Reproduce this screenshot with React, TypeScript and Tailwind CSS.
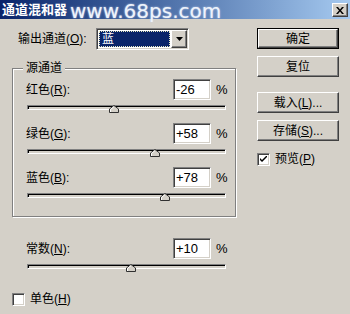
import React from 'react';

const sunken =
  'border border-t-[#808080] border-l-[#808080] border-r-white border-b-white shadow-[inset_1px_1px_0_#404040,inset_-1px_-1px_0_#d4d0c8]';
const raised =
  'border border-t-white border-l-white border-r-[#404040] border-b-[#404040] shadow-[inset_-1px_-1px_0_#808080]';

const Button = ({ children, primary }: { children: React.ReactNode; primary?: boolean }) =>
  primary ? (
    <div className="w-[82px] h-[21px] border border-black">
      <div className={`h-full flex items-center justify-center ${raised}`}>{children}</div>
    </div>
  ) : (
    <div className={`w-[82px] h-[21px] flex items-center justify-center ${raised}`}>{children}</div>
  );

const Checkbox = ({ checked }: { checked?: boolean }) => (
  <div className={`w-[13px] h-[13px] bg-white flex items-center justify-center ${sunken}`}>
    {checked && (
      <svg width="7" height="7" viewBox="0 0 7 7">
        <path d="M0 2 L0 4 L2 6 L7 1 L7 -1 L2 4 Z" fill="#000" />
      </svg>
    )}
  </div>
);

// value range is -200..200
const Slider = ({ value }: { value: number }) => {
  const pct = ((value + 200) / 400) * 100;
  return (
    <div className="relative ml-[1px] w-[199px] h-[8px]">
      <div className="mt-[3px] h-[5px] border border-t-[#808080] border-l-[#808080] border-r-white border-b-white bg-[#d4d0c8] shadow-[inset_1px_1px_0_#000]" />
      <svg
        className="absolute top-0"
        style={{ left: `calc(${pct}% - 5px)` }}
        width="10"
        height="8"
        viewBox="0 0 10 8"
      >
        <polygon points="5,0.5 9.5,4 9.5,7.5 0.5,7.5 0.5,4" fill="#d4d0c8" stroke="#303030" />
        <polyline points="1.5,7 1.5,4.4 5,1.6" fill="none" stroke="#fff" />
      </svg>
    </div>
  );
};

const ValueRow = ({ label, k, value }: { label: string; k: string; value: string }) => (
  <div className="flex items-center h-[21px]">
    <span className="w-[147px] text-[12px] leading-[14px]">
      {label}(<span className="underline">{k}</span>):
    </span>
    <div className={`w-[38px] h-[21px] bg-white flex items-center pl-[2px] text-[13px] ${sunken}`}>{value}</div>
    <span className="ml-[5px] text-[13px]">%</span>
  </div>
);

export default function App() {
  return (
    <div className="w-[350px] h-[314px] bg-[#d4d0c8] overflow-hidden text-black font-['Liberation_Sans','Noto_Sans_CJK_SC',sans-serif]">
      {/* title bar */}
      <div className="relative z-10 h-[19px] flex items-start bg-gradient-to-r from-[#0a246a] to-[#a6caf0]">
        <span className="pl-[2px] pt-[2px] text-[13px] leading-[15px] font-bold text-white">通道混和器</span>
        <span className="ml-[3px] mt-[1px] shrink-0 whitespace-nowrap font-['DejaVu_Sans',sans-serif] text-[20px] leading-[20px] text-[#eef3fb] [text-shadow:0_0_2px_#c8d6f0]">
          www.68ps.com
        </span>
        <div className={`ml-auto mr-[2px] mt-[3px] w-[16px] h-[14px] bg-[#d4d0c8] flex items-center justify-center ${raised}`}>
          <svg width="8" height="7" viewBox="0 0 8 7">
            <path d="M0 0h2l2 2.5L6 0h2L5 3.5 8 7H6L4 4.5 2 7H0l3-3.5z" fill="#000" />
          </svg>
        </div>
      </div>

      <div className="flex">
        {/* left column */}
        <div className="w-[245px] shrink-0 pl-[12px]">
          <div className="mt-[9px] flex items-center h-[22px]">
            <span className="w-[84px] pl-[6px] text-[12px] leading-[14px]">
              输出通道(<span className="underline">O</span>):
            </span>
            <div className={`w-[93px] h-[22px] bg-white flex p-[1px] ${sunken}`}>
              <div className="flex-1 m-[1px] bg-[#0a246a] outline outline-1 outline-dotted outline-[#e8e8c0] -outline-offset-1 flex items-center pl-[3px] text-[12px] leading-[14px] text-white">
                蓝
              </div>
              <div className={`w-[16px] bg-[#d4d0c8] flex items-center justify-center ${raised}`}>
                <svg width="7" height="4" viewBox="0 0 7 4">
                  <path d="M0 0h7L3.5 4z" fill="#000" />
                </svg>
              </div>
            </div>
          </div>

          {/* source channels group */}
          <div className="relative mt-[18px] w-[224px] h-[149px] border border-[#808080] shadow-[inset_1px_1px_0_#fff,1px_1px_0_#fff]">
            <span className="absolute -top-[8px] left-[10px] px-[3px] bg-[#d4d0c8] text-[12px] leading-[14px]">源通道</span>
            <div className="pl-[13px] pt-[10px]">
              <ValueRow label="红色" k="R" value="-26" />
              <div className="mt-[5px]">
                <Slider value={-26} />
              </div>
              <div className="mt-[10px]">
                <ValueRow label="绿色" k="G" value="+58" />
              </div>
              <div className="mt-[5px]">
                <Slider value={58} />
              </div>
              <div className="mt-[10px]">
                <ValueRow label="蓝色" k="B" value="+78" />
              </div>
              <div className="mt-[5px]">
                <Slider value={78} />
              </div>
            </div>
          </div>

          <div className="ml-[14px] mt-[21px]">
            <ValueRow label="常数" k="N" value="+10" />
            <div className="mt-[5px]">
              <Slider value={10} />
            </div>
          </div>

          <div className="mt-[20px] flex items-center">
            <Checkbox />
            <span className="ml-[5px] text-[12px] leading-[14px]">
              单色(<span className="underline">H</span>)
            </span>
          </div>
        </div>

        {/* right column */}
        <div className="pl-[12px] text-[12px] leading-[14px]">
          <div className="mt-[9px]">
            <Button primary>确定</Button>
          </div>
          <div className="mt-[7px]">
            <Button>复位</Button>
          </div>
          <div className="mt-[15px]">
            <Button>
              载入(<span className="underline">L</span>)...
            </Button>
          </div>
          <div className="mt-[7px]">
            <Button>
              存储(<span className="underline">S</span>)...
            </Button>
          </div>
          <div className="mt-[11px] flex items-center">
            <Checkbox checked />
            <span className="ml-[5px]">
              预览(<span className="underline">P</span>)
            </span>
          </div>
        </div>
      </div>
    </div>
  );
}
